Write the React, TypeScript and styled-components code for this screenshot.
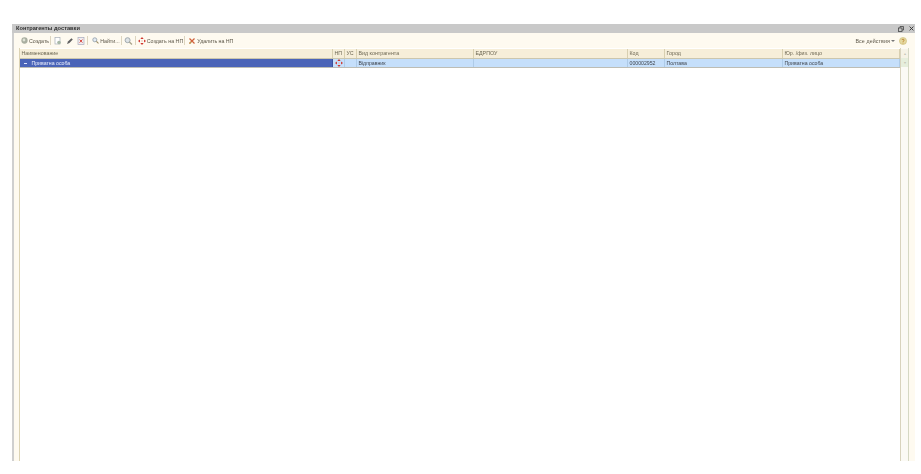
import React from "react";
import styled, { createGlobalStyle } from "styled-components";

const Global = createGlobalStyle`
  html, body { margin: 0; padding: 0; background: #fff; }
  body { font-family: "Liberation Sans", Arial, sans-serif; overflow: hidden; }
`;
const Page = styled.div`
  width: 921px; height: 474px; padding: 24px 6px 13px 12px; box-sizing: border-box; background: #fff;
`;
const Win = styled.div`
  height: 100%; display: flex; flex-direction: column; background: #fefaf0;
  border-left: 2px solid #cfcfcf;
`;
const Title = styled.div`
  height: 9px; flex: none; background: #c9c9c9; display: flex; align-items: center; justify-content: space-between;
  padding: 0 1px 0 4px; margin-left: -2px; font-size: 5.7px; font-weight: 700; color: #303030; line-height: 9px;
`;
const TitleText = styled.span`
  filter: blur(0.3px);
`;
const WinBtns = styled.div`
  display: flex; gap: 5px; align-items: center; color: #333; filter: blur(0.25px);
`;
const Toolbar = styled.div`
  height: 15px; flex: none; display: flex; align-items: center; padding: 0 8px 0 7px; font-size: 5.3px; color: #5c5648; filter: blur(0.3px);
`;
const Tool = styled.div<{ $gap?: number; $ls?: number }>`
  display: flex; align-items: center; gap: 1px; margin-right: ${p => p.$gap ?? 1}px; white-space: nowrap; color: #5c5648;
  letter-spacing: ${p => p.$ls ?? 0}px;
`;
const Sep = styled.div<{ $after?: number }>`
  width: 1px; height: 9px; background: #ddd5bf; margin-right: ${p => p.$after ?? 3}px;
`;
const Spacer = styled.div`
  flex: 1;
`;
const Body = styled.div`
  flex: 1; display: flex; min-height: 0; padding-left: 5px;
`;
const Grid = styled.div`
  width: 880px; flex: none; border-left: 1px solid #dcd3b4; border-right: 1px solid #d8d3bd; background: #fff; display: flex; flex-direction: column;
`;
const HeadRow = styled.div`
  display: flex; height: 10px; flex: none; background: #f6eed9; border-bottom: 1px solid #cbc6ae; box-sizing: border-box; margin-top: 1px;
`;
const DataRow = styled.div`
  display: flex; height: 9px; flex: none; background: #c5dffb; border-bottom: 1px solid #bdbdb5; box-sizing: border-box;
`;
const HCell = styled.div<{ $w: number }>`
  width: ${p => p.$w}px; flex: none; box-sizing: border-box; padding-left: 1.5px; border-right: 1px solid #d8cfb0;
  font-size: 5.3px; line-height: 9px; color: #6d6753; white-space: nowrap; overflow: hidden;
`;
const HLabel = styled.span`
  display: block; filter: blur(0.3px);
`;
const DCell = styled.div<{ $w: number; $sel?: boolean }>`
  width: ${p => p.$w}px; flex: none; box-sizing: border-box; padding-left: 1.5px; border-right: 1px solid ${p => p.$sel ? "#3c4f9c" : "#aecbe8"};
  font-size: 5.2px; line-height: 8px; color: ${p => p.$sel ? "#eef1ff" : "#40464f"}; background: ${p => p.$sel ? "#4a64b8" : "transparent"};
  white-space: nowrap; overflow: hidden; display: flex; align-items: center;
`;
const DLabel = styled.span`
  filter: blur(0.3px);
`;
const Dash = styled.span`
  width: 3px; height: 1px; background: #dfe6ff; margin: 0 5px 0 2px; flex: none;
`;
const Scroll = styled.div`
  width: 7px; flex: none; background: #fbfaf5; border-right: 1px solid #d5d8c4; display: flex; flex-direction: column; align-items: center;
`;
const ScrollCap = styled.div<{ $bg: string; $top?: boolean }>`
  width: 100%; height: 9px; margin-top: ${p => p.$top ? 1 : 0}px; background: ${p => p.$bg}; color: #c4c4b4; font-size: 4px; line-height: 9px; text-align: center;
`;

const cols = [
  { w: 313, h: "Наименование" },
  { w: 12, h: "НП" },
  { w: 12, h: "УС" },
  { w: 117, h: "Вид контрагента" },
  { w: 154, h: "ЕДРПОУ" },
  { w: 37, h: "Код" },
  { w: 118, h: "Город" },
  { w: 117, h: "Юр. /физ. лицо" },
];

const Move = ({ s = 8 }: { s?: number }) => (
  <svg width={s} height={s} viewBox="0 0 10 10">
    <g fill="#d0342c">
      <path d="M5 0 7 2.4H3z" /><path d="M5 10 7 7.6H3z" /><path d="M0 5 2.4 3v4z" /><path d="M10 5 7.6 3v4z" />
    </g>
    <circle cx="5" cy="5" r="1" fill="#e9b7b0" />
  </svg>
);
const Add = () => (
  <svg width="7" height="7" viewBox="0 0 8 8">
    <circle cx="4" cy="4" r="3.6" fill="#a9aea0" /><circle cx="3.4" cy="3.4" r="1.6" fill="#dfe3d6" />
  </svg>
);
const DocCopy = () => (
  <svg width="8" height="8" viewBox="0 0 8 8">
    <rect x="1" y="0.5" width="5" height="6.5" fill="#fff" stroke="#a8aeb8" strokeWidth=".7" />
    <circle cx="5" cy="5.5" r="1.8" fill="#a7b8a6" />
  </svg>
);
const Pencil = () => (
  <svg width="8" height="8" viewBox="0 0 8 8">
    <path d="M1 7 2 4.6 5.4 1.2 6.8 2.6 3.4 6z" fill="#5f5f5f" />
  </svg>
);
const DocDel = () => (
  <svg width="8" height="8" viewBox="0 0 8 8">
    <rect x="1" y="0.5" width="6" height="7" fill="#f0eef2" stroke="#a9a9bb" strokeWidth=".7" />
    <path d="M2.6 2.6 5.4 5.6M5.4 2.6 2.6 5.6" stroke="#d9483f" strokeWidth="1" />
  </svg>
);
const Search = () => (
  <svg width="7" height="7" viewBox="0 0 8 8">
    <circle cx="3.2" cy="3.2" r="2.3" fill="#e4ebf2" stroke="#8c9aa6" strokeWidth=".9" />
    <path d="M5 5 7.4 7.4" stroke="#9a8a60" strokeWidth="1.2" />
  </svg>
);
const SearchX = () => (
  <svg width="9" height="8" viewBox="0 0 9 8">
    <circle cx="3.6" cy="3.2" r="2.5" fill="#dfe4e6" stroke="#9aa3a8" strokeWidth=".9" />
    <path d="M5.4 5 8 7.5" stroke="#a8a48c" strokeWidth="1.3" />
  </svg>
);
const Cross = () => (
  <svg width="8" height="8" viewBox="0 0 8 8">
    <path d="M1.5 1.5 6.5 6.5M6.5 1.5 1.5 6.5" stroke="#d0603a" strokeWidth="1.2" />
    <path d="M1.5 6.5 3 5" stroke="#b0a050" strokeWidth="1.2" />
  </svg>
);
const Help = () => (
  <svg width="8" height="8" viewBox="0 0 9 9">
    <circle cx="4.5" cy="4.5" r="4" fill="#e6d9a0" stroke="#c9b56a" strokeWidth=".6" />
    <path d="M3.2 3.4C3.4 2.2 5.8 2.2 5.8 3.5 5.8 4.4 4.5 4.4 4.5 5.5" fill="none" stroke="#b5761e" strokeWidth=".9" />
    <circle cx="4.5" cy="6.8" r=".55" fill="#b5761e" />
  </svg>
);
const Restore = () => (
  <svg width="6" height="6" viewBox="0 0 6 6" fill="none" stroke="#444" strokeWidth=".8">
    <rect x=".5" y="2" width="3.5" height="3.5" /><path d="M2 2V.5h3.5V4H4" />
  </svg>
);
const Close = () => (
  <svg width="5" height="5" viewBox="0 0 6 6" stroke="#333" strokeWidth="1.1">
    <path d="M.7.7 5.3 5.3M5.3.7.7 5.3" />
  </svg>
);
const Caret = styled.span`
  width: 0; height: 0; border: 2px solid transparent; border-top: 2px solid #777; border-bottom: 0; margin: 0 3px 0 0;
`;

export default function App() {
  return (
    <Page>
      <Global />
      <Win>
        <Title>
          <TitleText>Контрагенты доставки</TitleText>
          <WinBtns><Restore /><Close /></WinBtns>
        </Title>
        <Toolbar>
          <Tool><Add />Создать</Tool><Sep />
          <Tool $gap={4}><DocCopy /></Tool>
          <Tool $gap={3}><Pencil /></Tool>
          <Tool $gap={2}><DocDel /></Tool><Sep $after={4} />
          <Tool $gap={1}><Search />Найти...</Tool><Sep $after={2} />
          <Tool $gap={2}><SearchX /></Tool><Sep $after={2} />
          <Tool><Move />Создать на НП</Tool><Sep />
          <Tool $ls={-0.05}><Cross />Удалить на НП</Tool>
          <Spacer />
          <Tool $gap={0} $ls={0.1}>Все действия<Caret /><Help /></Tool>
        </Toolbar>
        <Body>
          <Grid>
            <HeadRow>
              {cols.map(c => <HCell key={c.h} $w={c.w}><HLabel>{c.h}</HLabel></HCell>)}
            </HeadRow>
            <DataRow>
              <DCell $w={313} $sel><Dash /><DLabel>Приватна особа</DLabel></DCell>
              <DCell $w={12}><Move /></DCell>
              <DCell $w={12} />
              <DCell $w={117}><DLabel>Відправник</DLabel></DCell>
              <DCell $w={154} />
              <DCell $w={37}><DLabel>000002952</DLabel></DCell>
              <DCell $w={118}><DLabel>Полтава</DLabel></DCell>
              <DCell $w={117}><DLabel>Приватна особа</DLabel></DCell>
            </DataRow>
          </Grid>
          <Scroll>
            <ScrollCap $bg="#f6f3e6" $top>▴</ScrollCap>
            <ScrollCap $bg="#e6eedc">▾</ScrollCap>
          </Scroll>
        </Body>
      </Win>
    </Page>
  );
}
